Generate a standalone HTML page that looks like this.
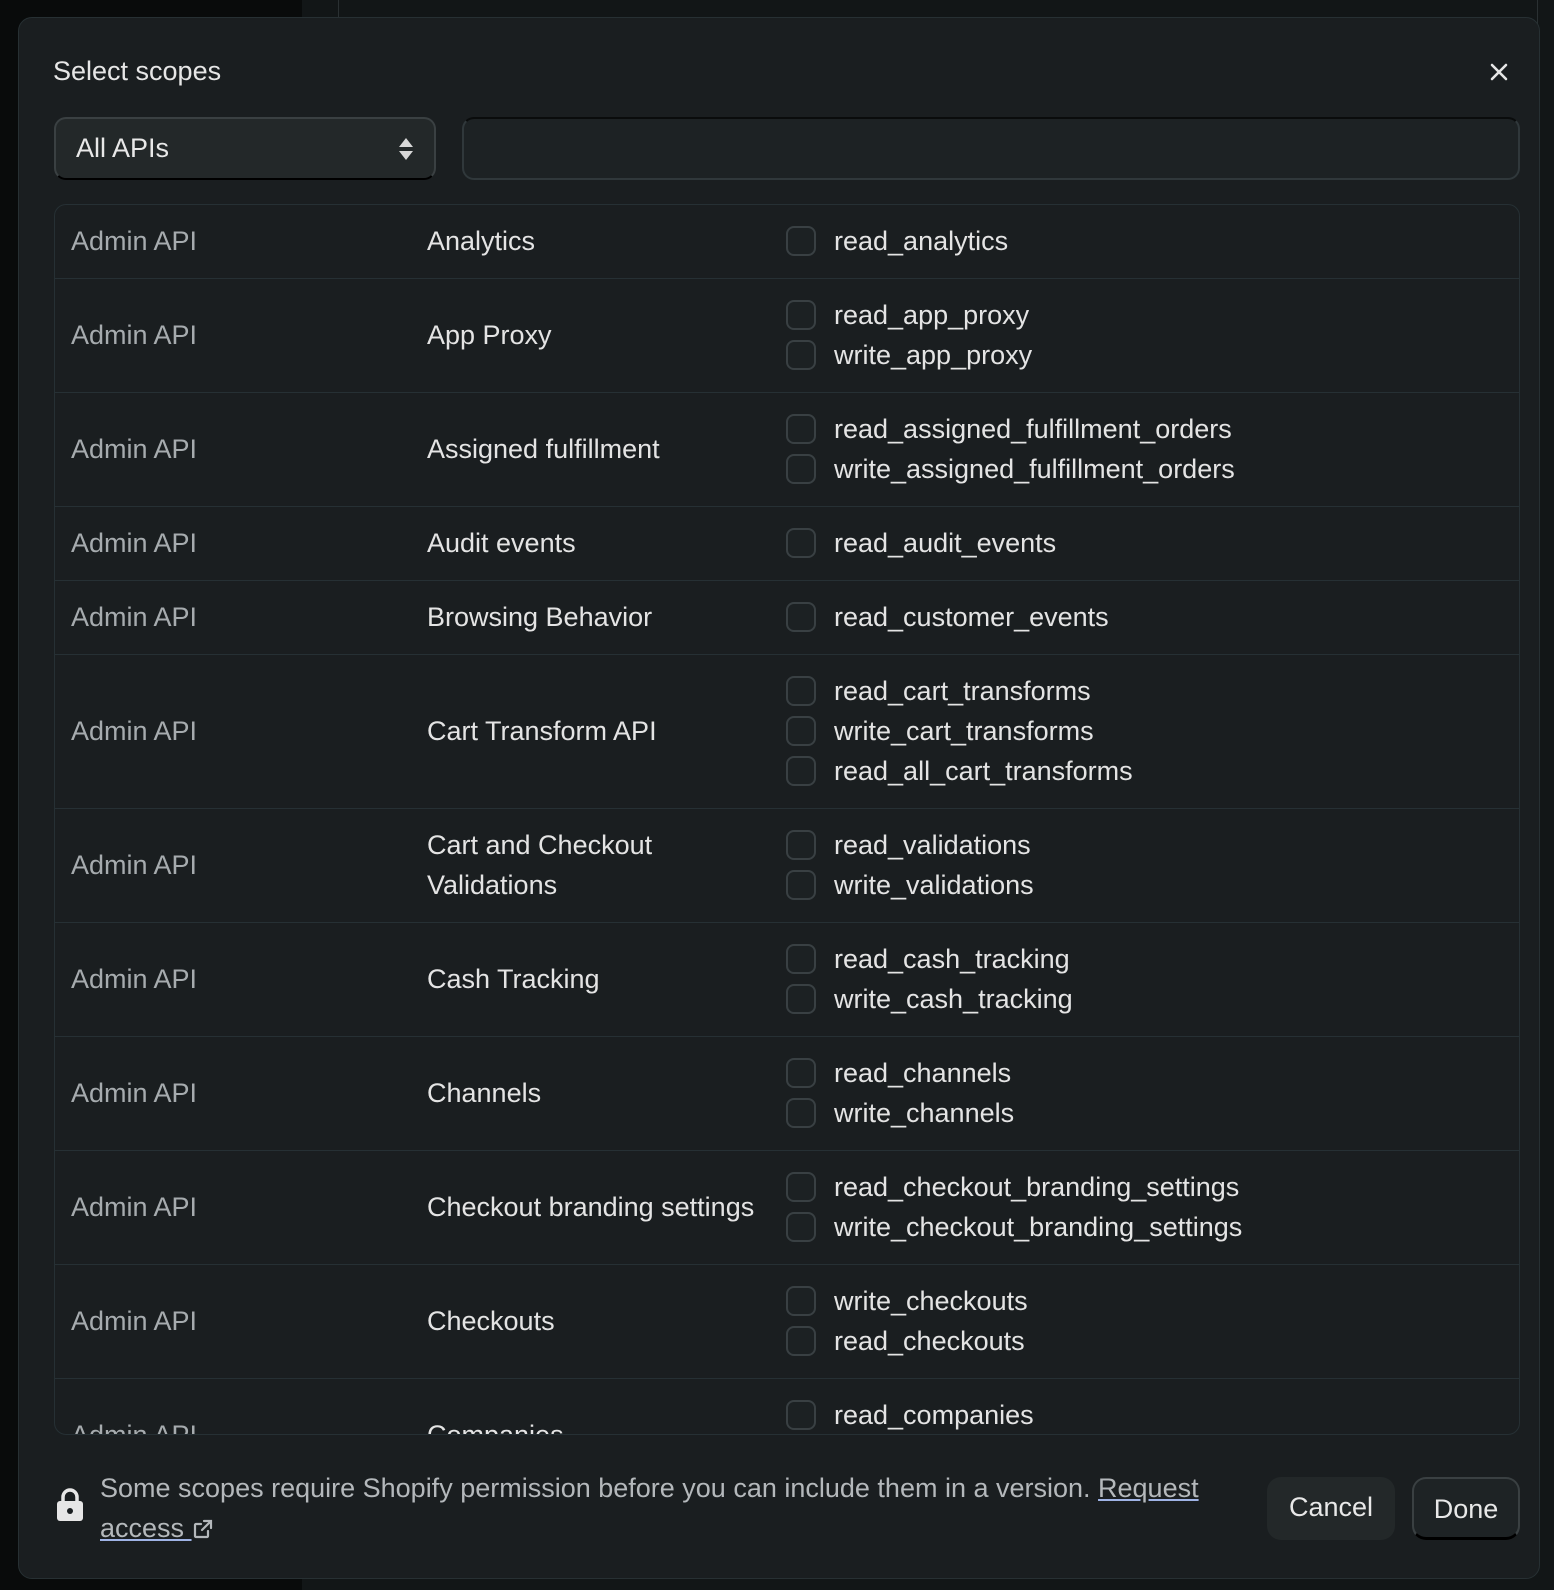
<!DOCTYPE html>
<html><head><style>
*{box-sizing:border-box;margin:0;padding:0}
body{width:1554px;height:1590px;background:#090b0b;font-family:"Liberation Sans",sans-serif;overflow:hidden;position:relative}
.bgpanel{position:absolute;left:302px;top:0;width:1252px;height:1590px;background:#121617}
.bgbox{position:absolute;left:338px;top:-20px;width:1200px;height:60px;border:1px solid #2a3032;border-radius:12px}
.modal{position:absolute;left:18px;top:17px;width:1522px;height:1562px;background:#1a1e20;border:1px solid #273033;border-radius:14px}
.title{position:absolute;left:34px;top:38px;font-size:27px;color:#e6e6e6}
.close{position:absolute;left:1470px;top:44px}
.sel{position:absolute;left:35px;top:99px;width:382px;height:63px;background:#232829;border:2px solid #3a4042;border-bottom-color:#000;border-radius:12px;color:#e8e8e8;font-size:27px;padding:14px 0 0 20px}
.search{position:absolute;left:443px;top:99px;width:1058px;height:63px;background:#1d2224;border:2px solid #30383b;border-top-color:#0a0c0c;border-radius:12px}
.table{position:absolute;left:35px;top:186px;width:1466px;height:1231px;border:1px solid #263034;border-radius:12px;overflow:hidden}
.row{display:flex;align-items:center;border-bottom:1px solid #263034;padding:16px 0 17px}
.c1{width:372px;padding-left:16px;color:#a6abae;font-size:27px}
.c2{width:359px;color:#e4e4e4;font-size:27px;line-height:40px}
.c3{color:#e4e4e4;font-size:27px}
.s{display:flex;align-items:center;height:40px}
.cb{width:30px;height:30px;border:2px solid #394043;border-radius:8px;background:#1c2123;margin-right:18px}
.foot{position:absolute;left:81px;top:1450px;width:1150px;font-size:27px;line-height:40px;color:#b4b8bb}
.foot a{color:#b4b8bb;text-decoration:underline;text-decoration-color:#9fb3e6}
.lock{position:absolute;left:37px;top:1470px}
.btn{position:absolute;top:1459px;height:63px;border-radius:14px;color:#e8e8e8;font-size:27px;text-align:center;line-height:60px}
</style></head><body>
<div class="bgpanel"></div><div class="bgbox"></div>
<div class="modal">
<div class="title">Select scopes</div>
<svg class="close" width="20" height="20" viewBox="0 0 20 20"><path d="M3 3L17 17M17 3L3 17" stroke="#e6e6e6" stroke-width="2.6" stroke-linecap="round"/></svg>
<div class="sel">All APIs<svg style="position:absolute;right:20px;top:18px" width="16" height="24" viewBox="0 0 16 24"><path d="M8 1L15 10H1Z M8 23L15 14H1Z" fill="#d8d8d8"/></svg></div>
<div class="search"></div>
<div class="table">
<div class="row"><div class="c1">Admin API</div><div class="c2">Analytics</div><div class="c3"><div class="s"><div class="cb"></div>read_analytics</div></div></div>
<div class="row"><div class="c1">Admin API</div><div class="c2">App Proxy</div><div class="c3"><div class="s"><div class="cb"></div>read_app_proxy</div><div class="s"><div class="cb"></div>write_app_proxy</div></div></div>
<div class="row"><div class="c1">Admin API</div><div class="c2">Assigned fulfillment</div><div class="c3"><div class="s"><div class="cb"></div>read_assigned_fulfillment_orders</div><div class="s"><div class="cb"></div>write_assigned_fulfillment_orders</div></div></div>
<div class="row"><div class="c1">Admin API</div><div class="c2">Audit events</div><div class="c3"><div class="s"><div class="cb"></div>read_audit_events</div></div></div>
<div class="row"><div class="c1">Admin API</div><div class="c2">Browsing Behavior</div><div class="c3"><div class="s"><div class="cb"></div>read_customer_events</div></div></div>
<div class="row"><div class="c1">Admin API</div><div class="c2">Cart Transform API</div><div class="c3"><div class="s"><div class="cb"></div>read_cart_transforms</div><div class="s"><div class="cb"></div>write_cart_transforms</div><div class="s"><div class="cb"></div>read_all_cart_transforms</div></div></div>
<div class="row"><div class="c1">Admin API</div><div class="c2">Cart and Checkout<br>Validations</div><div class="c3"><div class="s"><div class="cb"></div>read_validations</div><div class="s"><div class="cb"></div>write_validations</div></div></div>
<div class="row"><div class="c1">Admin API</div><div class="c2">Cash Tracking</div><div class="c3"><div class="s"><div class="cb"></div>read_cash_tracking</div><div class="s"><div class="cb"></div>write_cash_tracking</div></div></div>
<div class="row"><div class="c1">Admin API</div><div class="c2">Channels</div><div class="c3"><div class="s"><div class="cb"></div>read_channels</div><div class="s"><div class="cb"></div>write_channels</div></div></div>
<div class="row"><div class="c1">Admin API</div><div class="c2" style="white-space:nowrap">Checkout branding settings</div><div class="c3"><div class="s"><div class="cb"></div>read_checkout_branding_settings</div><div class="s"><div class="cb"></div>write_checkout_branding_settings</div></div></div>
<div class="row"><div class="c1">Admin API</div><div class="c2">Checkouts</div><div class="c3"><div class="s"><div class="cb"></div>write_checkouts</div><div class="s"><div class="cb"></div>read_checkouts</div></div></div>
<div class="row"><div class="c1">Admin API</div><div class="c2">Companies</div><div class="c3"><div class="s"><div class="cb"></div>read_companies</div><div class="s"><div class="cb"></div>write_companies</div></div></div>
</div>
<svg class="lock" width="28" height="34" viewBox="0 0 28 34"><path d="M7 14V9a7 7 0 0 1 14 0v5" fill="none" stroke="#e6e6e6" stroke-width="3.5"/><rect x="1" y="13" width="26" height="20" rx="3" fill="#e6e6e6"/><circle cx="14" cy="23" r="3" fill="#1a1e20"/></svg>
<div class="foot">Some scopes require Shopify permission before you can include them in a version. <a>Request access <svg width="22" height="22" viewBox="0 0 22 22" style="vertical-align:-3px"><path d="M12 3h7v7M19 3l-9 9M16 13v5a1 1 0 0 1-1 1H4a1 1 0 0 1-1-1V7a1 1 0 0 1 1-1h5" fill="none" stroke="#b4b8bb" stroke-width="2.2" stroke-linecap="round"/></svg></a></div>
<div class="btn" style="left:1248px;width:128px;background:#232829">Cancel</div>
<div class="btn" style="left:1393px;width:108px;background:#1e2325;border:2px solid #3a4042;border-bottom:3px solid #000">Done</div>
</div>
</body></html>
